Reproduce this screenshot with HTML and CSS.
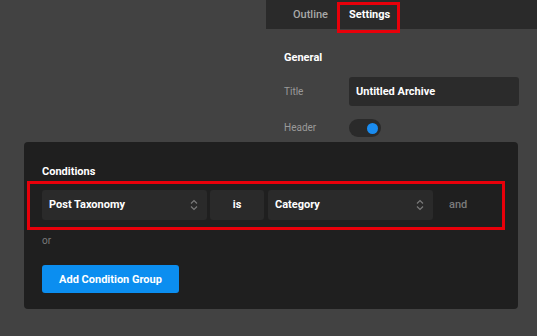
FILE: index.html
```html
<!DOCTYPE html>
<html lang="en">
<head>
  <meta charset="UTF-8">
  <title>Archive Settings</title>
  <link rel="stylesheet" href="styles.css">
</head>
<body>
  <div class="app">
    <main class="canvas"></main>

    <aside class="sidebar">
      <nav class="tabs">
        <span class="tab">Outline</span>
        <span class="tab active">Settings</span>
      </nav>
      <section class="panel">
        <h3>General</h3>
        <div class="field">
          <label>Title</label>
          <div class="input">Untitled Archive</div>
        </div>
        <div class="field">
          <label>Header</label>
          <span class="toggle"><span class="knob"></span></span>
        </div>
      </section>
    </aside>

    <div class="modal">
      <h3>Conditions</h3>
      <div class="cond-row">
        <div class="select wide">Post Taxonomy
          <svg class="chev" width="8" height="12" viewBox="0 0 8 12"><path d="M1 4.5 4 1.5 7 4.5M1 7.5 4 10.5 7 7.5" fill="none" stroke="#7a7a7a" stroke-width="1.2"/></svg>
        </div>
        <div class="select op">is</div>
        <div class="select wide">Category
          <svg class="chev" width="8" height="12" viewBox="0 0 8 12"><path d="M1 4.5 4 1.5 7 4.5M1 7.5 4 10.5 7 7.5" fill="none" stroke="#7a7a7a" stroke-width="1.2"/></svg>
        </div>
        <span class="muted and">and</span>
      </div>
      <p class="muted or">or</p>
      <button class="btn">Add Condition Group</button>
    </div>
  </div>
</body>
</html>
```

FILE: styles.css
```css
* { box-sizing: border-box; margin: 0; padding: 0; }
body {
  font: 11px/16px Roboto, "Liberation Sans", sans-serif;
  background: #424242;
  color: #fff;
}
.app {
  position: relative;
  width: 537px;
  height: 336px;
  display: flex;
  overflow: hidden;
}
.canvas { width: 266px; }
.sidebar { flex: 1; }
.tabs {
  height: 29px;
  background: #2a2a2a;
  display: flex;
  align-items: center;
  padding-left: 27px;
  gap: 21px;
}
.tab { color: #a8a8a8; font-weight: 500; }
.tab.active {
  color: #fff;
  font-weight: 700;
  position: relative;
}
.tab.active::after {
  content: "";
  position: absolute;
  left: -12px;
  right: -10px;
  top: -5px;
  bottom: -10px;
  border: 3px solid #e8000a;
}
.panel { padding: 21px 18px 0; }
.panel h3 { font-size: 11px; font-weight: 700; margin-bottom: 11px; }
.field {
  display: flex;
  align-items: center;
  margin-bottom: 13px;
}
.field label {
  width: 65px;
  color: #9a9a9a;
  font-size: 10px;
}
.input {
  width: 170px;
  height: 29px;
  background: #2b2b2b;
  border-radius: 3px;
  padding: 0 7px;
  display: flex;
  align-items: center;
  font-weight: 700;
}
.toggle {
  width: 32px;
  height: 18px;
  background: #2a2a2a;
  border-radius: 9px;
  display: flex;
  align-items: center;
  justify-content: flex-end;
  padding-right: 3px;
}
.knob {
  width: 11px;
  height: 11px;
  border-radius: 50%;
  background: #1a8cf0;
}
.modal {
  position: absolute;
  left: 24px;
  top: 142px;
  width: 494px;
  height: 167px;
  background: #1f1f1f;
  border-radius: 4px;
  padding: 22px 18px 0;
}
.modal h3 { font-size: 11px; font-weight: 700; margin-bottom: 1px; }
.cond-row {
  display: flex;
  align-items: center;
  margin: 0 -5px 0 -15px;
  border: 3px solid #e8000a;
  padding: 6px 0 7px 12px;
  height: 49px;
}
.select {
  height: 30px;
  background: #2a2a2a;
  border-radius: 3px;
  display: flex;
  align-items: center;
  font-weight: 700;
  padding: 0 7px;
  margin-right: 3px;
}
.select.wide {
  width: 165px;
  justify-content: space-between;
  padding-right: 9px;
}
.select.op {
  width: 54px;
  justify-content: center;
  margin-right: 4px;
}
.muted { color: #7b7b7b; }
.and { margin-left: 13px; font-weight: 500; }
.or { margin: 3px 0 16px; font-size: 10px; }
.btn {
  width: 137px;
  height: 28px;
  border: none;
  border-radius: 3px;
  background: #0b8ef0;
  color: #fff;
  font: 700 11px Roboto, "Liberation Sans", sans-serif;
}
```
